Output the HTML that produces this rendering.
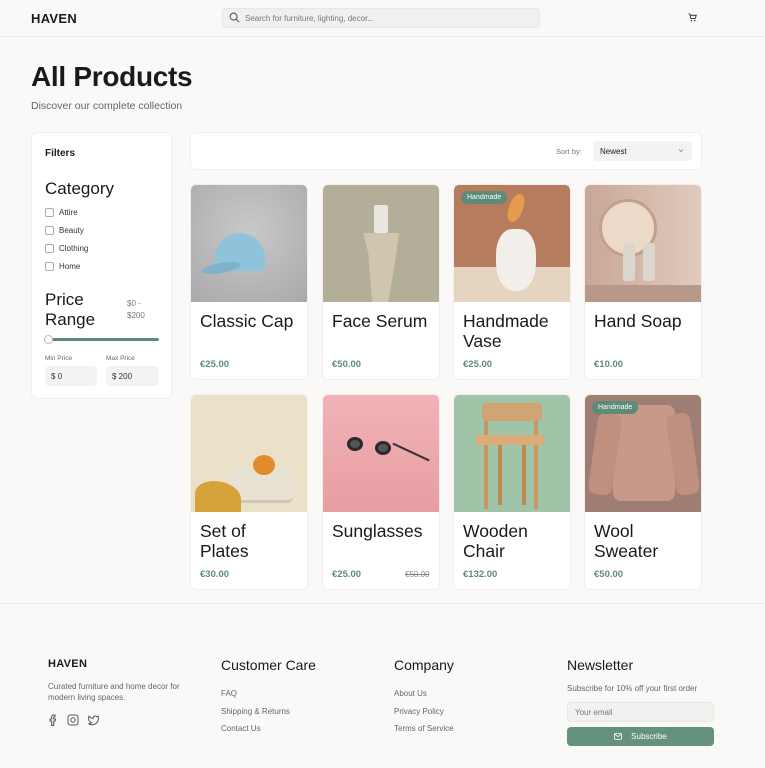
<!DOCTYPE html>
<html><head><meta charset="utf-8"><style>
*{box-sizing:border-box;margin:0;padding:0}
body{width:765px;height:768px;background:#faf9f7;font-family:"Liberation Sans",sans-serif;color:#1a1a1a;position:relative;overflow:hidden}
.abs{position:absolute}
.hdr{left:0;top:0;width:765px;height:37px;border-bottom:1px solid #eeedea}
.logo{font-weight:bold;font-size:13px;letter-spacing:.3px}
.search{left:222px;top:8px;width:318px;height:20px;background:#f1f0ee;border:1px solid #e8e7e4;border-radius:4px;font-size:8px;color:#777;padding:5px 0 0 22px}
.card{background:#fff;border-radius:6px;border:1px solid #f0efec}
.pc{position:absolute;width:118px;height:196px;background:#fff;border-radius:6px;overflow:hidden;border:1px solid #f0efec}
.pc .img{height:117px;position:relative;overflow:hidden}
.pc .t{position:absolute;left:9px;top:126px;font-size:17.5px;line-height:20px;color:#1a1a1a}
.pc .p{position:absolute;left:9px;top:174px;font-size:9.5px;font-weight:bold;color:#5e8b78}
.badge{position:absolute;left:7px;top:6px;background:#5e8b78;color:#fff;font-size:7px;padding:3px 6px;border-radius:8px}
.cb{display:flex;align-items:center;font-size:8px;color:#333;height:18px}
.cb i{width:9px;height:9px;border:1px solid #aaa;border-radius:2px;margin-right:5px;display:inline-block}
.ft{font-size:8px;color:#666}
.fh{font-size:14px;color:#1a1a1a}
</style></head><body>
<div class="abs hdr"></div>
<div class="abs logo" style="left:31px;top:11px">HAVEN</div>
<div class="abs search">Search for furniture, lighting, decor...</div>
<svg class="abs" style="left:229px;top:12px" width="11" height="11" viewBox="0 0 12 12"><circle cx="5" cy="5" r="3.8" fill="none" stroke="#555" stroke-width="1.2"/><path d="M8 8l3 3" stroke="#555" stroke-width="1.2"/></svg>
<svg class="abs" style="left:688px;top:13px" width="9" height="9" viewBox="0 0 10 10"><path d="M0.5 1h1.5l1.2 5h5l1-3.5H2.5" fill="none" stroke="#333" stroke-width="1"/><circle cx="3.8" cy="8.5" r=".8" fill="#333"/><circle cx="7.5" cy="8.5" r=".8" fill="#333"/></svg>

<div class="abs" style="left:31px;top:61px;font-size:28px;font-weight:bold;letter-spacing:-.3px">All Products</div>
<div class="abs" style="left:31px;top:100px;font-size:10.5px;color:#666">Discover our complete collection</div>

<div class="abs card" style="left:31px;top:132px;width:141px;height:267px"></div>
<div class="abs" style="left:45px;top:148px;font-size:10px;font-weight:bold">Filters</div>
<div class="abs" style="left:45px;top:179px;font-size:17px">Category</div>
<div class="abs" style="left:45px;top:203px">
<div class="cb"><i></i>Attire</div><div class="cb"><i></i>Beauty</div><div class="cb"><i></i>Clothing</div><div class="cb"><i></i>Home</div></div>
<div class="abs" style="left:45px;top:290px;font-size:17px;line-height:20px">Price<br>Range</div>
<div class="abs" style="left:127px;top:298px;font-size:8px;color:#777;line-height:12px">$0 -<br>$200</div>
<div class="abs" style="left:48px;top:338px;width:111px;height:3px;background:#5e8b78;border-radius:2px"></div>
<div class="abs" style="left:44px;top:335px;width:9px;height:9px;background:#fff;border:1px solid #bbb;border-radius:50%"></div>
<div class="abs" style="left:45px;top:355px;font-size:6.5px;color:#666">Min Price</div>
<div class="abs" style="left:106px;top:355px;font-size:6.5px;color:#666">Max Price</div>
<div class="abs" style="left:45px;top:366px;width:52px;height:20px;background:#f4f3f1;border-radius:4px;font-size:8px;padding:6px 0 0 6px;color:#333">$ 0</div>
<div class="abs" style="left:106px;top:366px;width:53px;height:20px;background:#f4f3f1;border-radius:4px;font-size:8px;padding:6px 0 0 6px;color:#333">$ 200</div>

<div class="abs card" style="left:190px;top:132px;width:512px;height:38px"></div>
<div class="abs" style="left:556px;top:147px;font-size:7.5px;color:#777">Sort by:</div>
<div class="abs" style="left:593px;top:141px;width:99px;height:20px;background:#f4f3f1;border-radius:4px;font-size:8px;padding:6px 0 0 7px">Newest</div>
<svg class="abs" style="left:678px;top:148px" width="6" height="5" viewBox="0 0 6 5"><path d="M1 1.5l2 2 2-2" fill="none" stroke="#888" stroke-width=".8"/></svg>

<!-- row1 -->
<div class="pc" style="left:190px;top:184px"><div class="img" style="background:radial-gradient(circle at 50% 40%,#c9c8ca,#a9a8aa)">
<div class="abs" style="left:24px;top:48px;width:50px;height:38px;background:#8fc3dc;border-radius:26px 26px 4px 4px"></div>
<div class="abs" style="left:10px;top:78px;width:40px;height:10px;background:#7fb3cc;border-radius:50%;transform:rotate(-10deg)"></div></div>
<div class="t">Classic Cap</div><div class="p">€25.00</div></div>
<div class="pc" style="left:322px;top:184px"><div class="img" style="background:#b2ae98">
<div class="abs" style="left:51px;top:20px;width:14px;height:28px;background:#e9e6e0;border-radius:2px"></div>
<div class="abs" style="left:40px;top:48px;width:36px;height:69px;background:#cfc6ad;clip-path:polygon(0 0,100% 0,90% 40%,70% 100%,25% 100%,15% 30%)"></div></div>
<div class="t">Face Serum</div><div class="p">€50.00</div></div>
<div class="pc" style="left:453px;top:184px"><div class="img" style="background:linear-gradient(#b57d5d 70%,#e5d4c0 70%)">
<div class="abs" style="left:42px;top:44px;width:40px;height:62px;background:#f2eeea;border-radius:40% 40% 45% 45%"></div>
<div class="abs" style="left:55px;top:8px;width:14px;height:30px;background:#e59a4c;border-radius:50%;transform:rotate(20deg)"></div>
<div class="badge">Handmade</div></div>
<div class="t">Handmade<br>Vase</div><div class="p">€25.00</div></div>
<div class="pc" style="left:584px;top:184px"><div class="img" style="background:linear-gradient(90deg,#c8a796,#e0cbbd)">
<div class="abs" style="left:14px;top:14px;width:58px;height:58px;background:#edd9c8;border-radius:50%;border:3px solid #c1a08c"></div>
<div class="abs" style="left:38px;top:58px;width:12px;height:38px;background:#ddd6cf;border-radius:3px"></div>
<div class="abs" style="left:58px;top:58px;width:12px;height:38px;background:#ddd6cf;border-radius:3px"></div>
<div class="abs" style="left:0;top:100px;width:118px;height:17px;background:#b89888"></div></div>
<div class="t">Hand Soap</div><div class="p">€10.00</div></div>
<!-- row2 -->
<div class="pc" style="left:190px;top:394px"><div class="img" style="background:#ebe0c8">
<div class="abs" style="left:38px;top:72px;width:64px;height:36px;background:#e8e2d4;border-radius:6px;border-bottom:3px solid #cfc6b5"></div>
<div class="abs" style="left:62px;top:60px;width:22px;height:20px;background:#e38a2a;border-radius:50%"></div>
<div class="abs" style="left:4px;top:86px;width:46px;height:31px;background:#d6a23a;border-radius:40% 60% 0 0"></div></div>
<div class="t">Set of<br>Plates</div><div class="p">€30.00</div></div>
<div class="pc" style="left:322px;top:394px"><div class="img" style="background:linear-gradient(#f1b3b6,#e89da2)">
<div class="abs" style="left:24px;top:42px;width:16px;height:14px;border:3px solid #2a2a2a;border-radius:50%;background:#555"></div>
<div class="abs" style="left:52px;top:46px;width:16px;height:14px;border:3px solid #2a2a2a;border-radius:50%;background:#555"></div>
<div class="abs" style="left:68px;top:56px;width:40px;height:2px;background:#333;transform:rotate(25deg)"></div></div>
<div class="t">Sunglasses</div><div class="p">€25.00</div><div class="abs" style="left:82px;top:175px;font-size:8px;color:#888;text-decoration:line-through">€50.00</div></div>
<div class="pc" style="left:453px;top:394px"><div class="img" style="background:#9fc4a8">
<div class="abs" style="left:28px;top:8px;width:60px;height:18px;background:#d2a474;border-radius:4px"></div>
<div class="abs" style="left:30px;top:26px;width:4px;height:88px;background:#c8965f"></div>
<div class="abs" style="left:80px;top:26px;width:4px;height:88px;background:#c8965f"></div>
<div class="abs" style="left:22px;top:40px;width:68px;height:10px;background:#d9ac7a;border-radius:2px"></div>
<div class="abs" style="left:44px;top:50px;width:4px;height:60px;background:#bb8a55"></div>
<div class="abs" style="left:68px;top:50px;width:4px;height:60px;background:#bb8a55"></div></div>
<div class="t">Wooden<br>Chair</div><div class="p">€132.00</div></div>
<div class="pc" style="left:584px;top:394px"><div class="img" style="background:#9e7d73">
<div class="abs" style="left:28px;top:10px;width:62px;height:96px;background:#c8998a;border-radius:8px"></div>
<div class="abs" style="left:8px;top:18px;width:24px;height:82px;background:#bf8f80;border-radius:8px;transform:rotate(8deg)"></div>
<div class="abs" style="left:86px;top:18px;width:24px;height:82px;background:#bf8f80;border-radius:8px;transform:rotate(-8deg)"></div>
<div class="badge">Handmade</div></div>
<div class="t">Wool<br>Sweater</div><div class="p">€50.00</div></div>

<!-- footer -->
<div class="abs" style="left:0;top:603px;width:765px;height:1px;background:#ecebe8"></div>
<div class="abs logo" style="left:48px;top:658px;font-size:11px">HAVEN</div>
<div class="abs ft" style="left:48px;top:681px;line-height:11px">Curated furniture and home decor for<br>modern living spaces.</div>
<svg class="abs" style="left:48px;top:714px" width="54" height="12" viewBox="0 0 54 12" fill="none" stroke="#555" stroke-width="1">
<path d="M7 1H5.5A1.8 1.8 0 0 0 3.7 2.8V5H2v2h1.7v4.5h2V7h1.5l.3-2H5.7V3.3c0-.3.2-.5.5-.5H7z"/>
<rect x="20" y="1" width="10" height="10" rx="2.5"/><circle cx="25" cy="6" r="2.2"/>
<path d="M50 2.2a4 4 0 0 1-1.3.5 2 2 0 0 0-3.5 1.6A5.7 5.7 0 0 1 41 2.2s-2 4.6 2.6 6.6A5 5 0 0 1 40.5 9.8c4.6 2.5 10 0 10-5.8 0-.1 0-.3 0-.4A3.5 3.5 0 0 0 50 2.2z"/></svg>
<div class="abs fh" style="left:221px;top:657px">Customer Care</div>
<div class="abs ft" style="left:221px;top:685px;line-height:17.5px">FAQ<br>Shipping &amp; Returns<br>Contact Us</div>
<div class="abs fh" style="left:394px;top:657px">Company</div>
<div class="abs ft" style="left:394px;top:685px;line-height:17.5px">About Us<br>Privacy Policy<br>Terms of Service</div>
<div class="abs fh" style="left:567px;top:657px">Newsletter</div>
<div class="abs ft" style="left:567px;top:684px">Subscribe for 10% off your first order</div>
<div class="abs" style="left:567px;top:702px;width:147px;height:20px;background:#f2f1ef;border:1px solid #e8e7e4;border-radius:4px;font-size:8px;color:#777;padding:5px 0 0 7px">Your email</div>
<div class="abs" style="left:567px;top:727px;width:147px;height:19px;background:#65917f;border-radius:4px;font-size:8px;color:#fff;text-align:center;padding-top:5px"><svg width="8" height="7" viewBox="0 0 8 7" style="vertical-align:-1px"><rect x=".5" y=".5" width="7" height="6" rx="1" fill="none" stroke="#fff" stroke-width=".8"/><path d="M.8 1.2l3.2 2.4 3.2-2.4" fill="none" stroke="#fff" stroke-width=".8"/></svg>&nbsp;&nbsp;&nbsp;&nbsp;Subscribe</div>
</body></html>
